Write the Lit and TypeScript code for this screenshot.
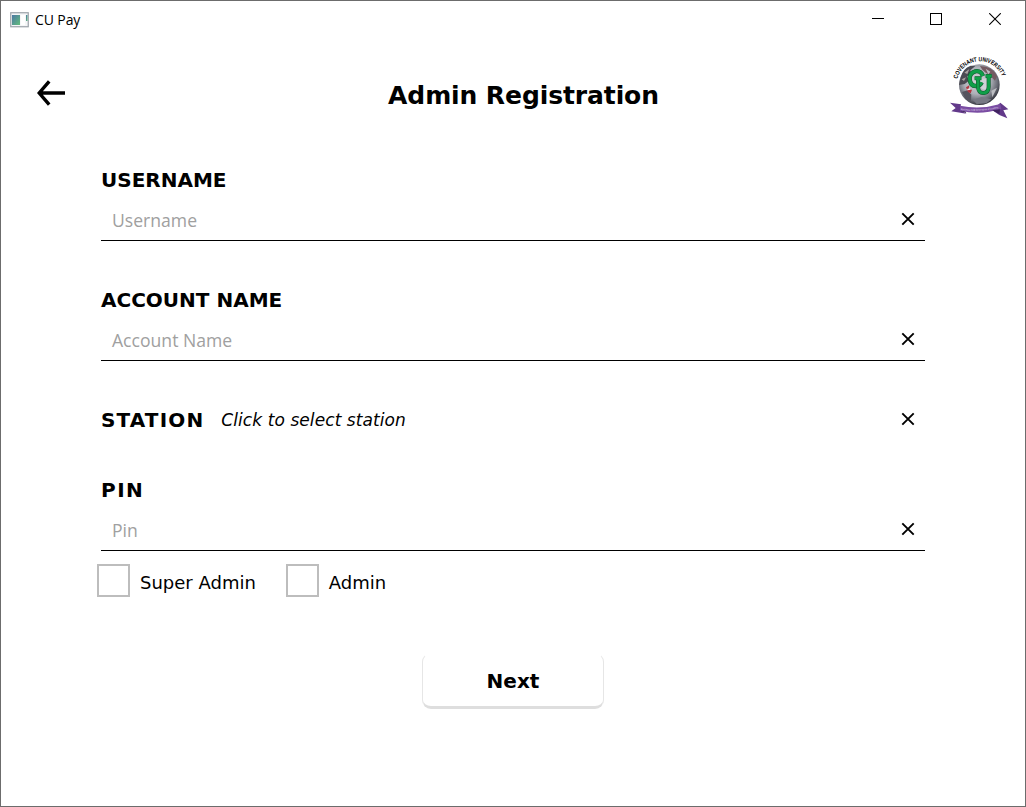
import { LitElement, html, css, svg } from "lit";
import { customElement, property } from "lit/decorators.js";

const clearIcon = svg`<path d="M1.3 1.3 L12.7 12.7 M12.7 1.3 L1.3 12.7" stroke="#000" stroke-width="1.9" fill="none"/>`;

@customElement("cu-crest")
class CuCrest extends LitElement {
  static styles = css`
    :host { display: block; width: 80px; height: 80px; }
    svg { display: block; }
    .motto { font: bold 18.5px "Liberation Sans", Arial, sans-serif; fill: #000; }
    .ribbon-text { font: bold 8px "Liberation Sans", Arial, sans-serif; fill: #cdbcdf; }
  `;
  render() {
    return html`<svg width="80" height="80" viewBox="0 0 240 240">
      <defs>
        <radialGradient id="g" cx="45%" cy="40%" r="60%">
          <stop offset="0" stop-color="#d5d7dc" />
          <stop offset="0.55" stop-color="#aeb0b8" />
          <stop offset="0.85" stop-color="#666872" />
          <stop offset="1" stop-color="#34353e" />
        </radialGradient>
        <path id="arc" d="M52 93 A70 70 0 0 1 188 93" />
        <path id="rib" d="M62 186 Q120 193 178 180" />
      </defs>
      <circle cx="118" cy="110" r="61" fill="url(#g)" />
      <path d="M62 88 Q68 62 92 53 L106 54 L91 67 L94 78 L81 85 L87 98 L74 108 L57 111Z" fill="#4b4b53" />
      <path d="M73 74 L88 63 L82 78Z M65 94 L78 88 L72 99Z" fill="#aaa2a1" />
      <path d="M120 54 Q157 54 171 85 L165 98 L148 80 L137 74 L127 65Z" fill="#745b61" />
      <path d="M137 62 L151 71 L145 79Z M154 128 L171 119 L157 148Z" fill="#bbbcc1" />
      <path d="M66 132 L82 127 L94 140 L93 158 L78 155Z" fill="#55545e" />
      <path d="M98 155 L125 147 L154 154 L139 166 L110 168Z" fill="#777984" />
      <path d="M78 118 L88 112 L86 124 L96 125 L92 136 L84 132Z" fill="#b5343e" />
      <path d="M82 125 L91 123" stroke="#f2eded" stroke-width="4" />
      <path d="M120 106 V92 H144 V120 Q133 130 124 120Z" fill="#cfd2d6" />
      <path d="M129 84 Q122 67 106 70 Q88 75 89 93 Q91 115 109 114 Q121 113 125 103"
        fill="none" stroke="#12522c" stroke-width="13" />
      <path d="M129 84 Q122 67 106 70 Q88 75 89 93 Q91 115 109 114 Q121 113 125 103"
        fill="none" stroke="#0f9f48" stroke-width="10" />
      <path d="M104 91 H124 M114 91 V116 Q115 136 131 135 Q146 133 146 116 V86 M137 84 H155"
        fill="none" stroke="#12522c" stroke-width="12" />
      <path d="M104 91 H124 M114 91 V116 Q115 136 131 135 Q146 133 146 116 V86 M137 84 H155"
        fill="none" stroke="#0f9f48" stroke-width="9" />
      <path d="M30 164 L63 169 L60 185 L79 197 L34 190 L47 180Z" fill="#62398a" />
      <path d="M181 164 L205 184 L190 187 L202 211 L178 201 L157 187Z" fill="#62398a" />
      <path d="M60 173 Q120 186 181 168 L184 183 Q121 202 60 188Z" fill="#7a4da3" />
      <path d="M60 188 L79 196 L76 190 M157 187 L180 184 L178 198Z" fill="#40245f" />
      <text class="ribbon-text" textLength="114" lengthAdjust="spacingAndGlyphs"><textPath href="#rib">Raising a new Generation of Leaders</textPath></text>
      <text class="motto" textLength="179" lengthAdjust="spacingAndGlyphs"><textPath href="#arc">COVENANT UNIVERSITY</textPath></text>
    </svg>`;
  }
}

@customElement("cu-field")
class CuField extends LitElement {
  @property() label = "";
  @property() hint = "";
  @property() fit = "";
  static styles = css`
    :host { display: block; height: 81px; font-family: Verdana, "DejaVu Sans", sans-serif; }
    .label { height: 40px; line-height: 40px; font-size: 20px; font-weight: bold; white-space: nowrap; }
    .label.wide { letter-spacing: 1.5px; }
    .entry { height: 40px; border-bottom: 1px solid #000; display: flex; align-items: center; justify-content: space-between; padding: 0 10px 0 11px; }
    .hint { font: 17.6px/40px "Open Sans", "Noto Sans", sans-serif; color: #a0a0a0; }
    svg { display: block; margin-bottom: 2px; }
  `;
  render() {
    return html`<div class="label ${this.fit}">${this.label}</div>
      <div class="entry"><span class="hint">${this.hint}</span>
        <svg width="14" height="14" viewBox="0 0 14 14">${clearIcon}</svg></div>`;
  }
}

@customElement("app-root")
class AppRoot extends LitElement {
  static styles = css`
    :host { display: block; width: 1026px; height: 807px; overflow: hidden; color: #000; font-family: Verdana, "DejaVu Sans", sans-serif; }
    .window { box-sizing: border-box; height: 807px; border: 1px solid #6c6c6c; background: #fff; }
    svg { display: block; }
    .titlebar { height: 38px; display: flex; align-items: center; padding-left: 9px; }
    .name { font: 14px/38px "Open Sans", sans-serif; letter-spacing: -0.1px; margin-left: 6px; flex: 1; }
    .controls { display: flex; gap: 46px; padding: 0 25px 2px 0; }
    .controls svg:last-child { margin-left: 1px; margin-right: -1px; }
    .header { height: 80px; display: grid; grid-template-columns: 100px 1fr 85px; padding-top: 8px; }
    .back { padding: 33px 0 0 36px; }
    h1 { margin: 0; padding-left: 6px; text-align: center; font-size: 25px; line-height: 98px; height: 80px; font-weight: bold; letter-spacing: -0.1px; }
    cu-crest { margin-top: 1px; }
    .form { width: 824px; padding: 33px 0 0 100px; }
    cu-field + cu-field { margin-top: 39px; }
    .station { height: 40px; display: flex; align-items: center; margin: 39px 0 30px; padding-right: 10px; }
    .station b { font-size: 20px; letter-spacing: 1.15px; }
    .station i { font-size: 17px; letter-spacing: 0.08px; margin-left: 17px; flex: 1; }
    .station svg { margin-bottom: 2px; }
    .roles { display: flex; margin: 13px 0 0 -4px; height: 33px; }
    .role { display: flex; align-items: center; font-size: 18px; margin-right: 30px; }
    .box { box-sizing: border-box; width: 33px; height: 33px; border: 2px solid #bdbdbd; margin-right: 10px; }
    .role span { padding-top: 3px; }
    .next { display: block; width: 182px; height: 56px; margin: 56px 0 0 421px; padding: 2px 0 0; background: #fff; border: 1px solid #e6e6e6; border-top-color: transparent; border-bottom: 3px solid #dedede; border-radius: 9px; font: bold 20px Verdana, "DejaVu Sans", sans-serif; color: #000; }
  `;
  render() {
    return html`<div class="window">
      <div class="titlebar">
        <svg width="19" height="16" viewBox="0 0 19 16">
          <defs><linearGradient id="a" x2="1" y2="1"><stop stop-color="#4c78a4" /><stop offset="1" stop-color="#62bd7c" /></linearGradient></defs>
          <rect x=".75" y=".75" width="17.5" height="14" fill="#f5f6f7" stroke="#9ba2a8" stroke-width="1.2" />
          <rect x="2" y="3" width="8" height="10" fill="url(#a)" />
          <rect x="11" y="3" width="4" height="10" fill="#fff" />
          <rect x="16" y="3" width="1.5" height="6" fill="url(#a)" />
        </svg>
        <span class="name">CU Pay</span>
        <div class="controls">
          <svg width="12" height="12" viewBox="0 0 12 12"><path d="M0 5.5H12" stroke="#000" /></svg>
          <svg width="12" height="12" viewBox="0 0 12 12"><rect x=".5" y=".5" width="11" height="11" fill="none" stroke="#000" /></svg>
          <svg width="12" height="12" viewBox="0 0 12 12"><path d="M.2 .2L11.8 11.8M11.8 .2L.2 11.8" stroke="#000" stroke-width="1.1" /></svg>
        </div>
      </div>
      <div class="header">
        <div class="back"><svg width="29" height="26" viewBox="0 0 29 26"><path d="M12.2 1.3L2.2 13L12.2 24.7M2 13H28" fill="none" stroke="#000" stroke-width="3.4" /></svg></div>
        <h1>Admin Registration</h1>
        <cu-crest></cu-crest>
      </div>
      <div class="form">
        <cu-field label="USERNAME" hint="Username"></cu-field>
        <cu-field label="ACCOUNT NAME" hint="Account Name"></cu-field>
        <div class="station"><b>STATION</b><i>Click to select station</i>
          <svg width="14" height="14" viewBox="0 0 14 14">${clearIcon}</svg></div>
        <cu-field label="PIN" hint="Pin" fit="wide"></cu-field>
        <div class="roles">
          <div class="role"><div class="box"></div><span>Super Admin</span></div>
          <div class="role"><div class="box"></div><span>Admin</span></div>
        </div>
      </div>
      <button class="next">Next</button>
    </div>`;
  }
}
